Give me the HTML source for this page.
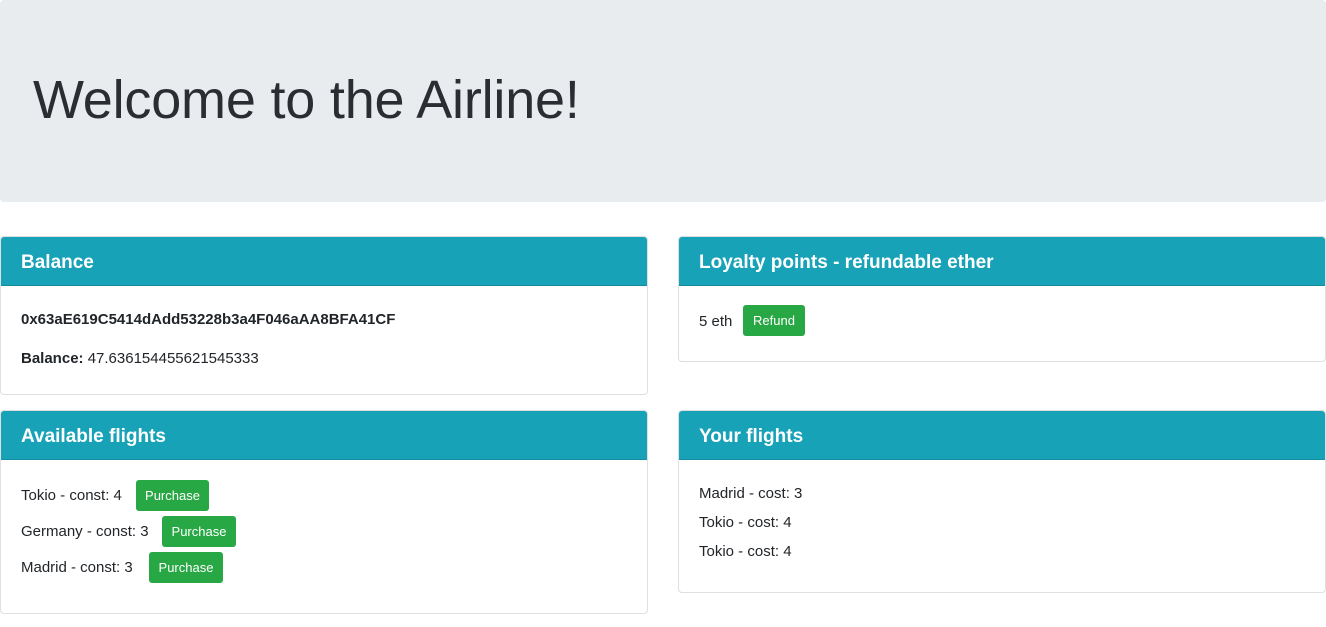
<!DOCTYPE html>
<html><head><meta charset="utf-8"><style>
*{box-sizing:border-box;margin:0;padding:0}
body{width:1326px;height:627px;background:#fff;font-family:"Liberation Sans",sans-serif;color:#212529;position:relative;overflow:hidden;font-size:15px}
.jumbo{position:absolute;left:0;top:0;width:1326px;height:202px;background:#e9ecef;border-radius:4px}
.jumbo h1{position:absolute;left:33px;top:68px;font-size:54px;font-weight:300;color:#2a2e32;letter-spacing:-0.2px;line-height:1.2}
.card{position:absolute;border:1px solid rgba(0,0,0,.125);border-radius:4px;overflow:hidden;background:#fff}
.hd{height:49px;background:#17a2b8;color:#fff;font-weight:bold;font-size:19px;padding:0 20px;line-height:51px;border-bottom:1px solid rgba(0,0,0,.125)}
.t{position:absolute;white-space:nowrap;line-height:20px}
.btn{position:absolute;background:#28a745;color:#fff;border-radius:3px;font-size:13px;text-align:center;line-height:32px;height:31px}
</style></head><body>
<div class="jumbo"><h1>Welcome to the Airline!</h1></div>

<div class="card" style="left:0;top:236px;width:648px;height:159px"><div class="hd">Balance</div></div>
<div class="t" style="left:21px;top:310px;font-weight:bold">0x63aE619C5414dAdd53228b3a4F046aAA8BFA41CF</div>
<div class="t" style="left:21px;top:349px"><b>Balance:</b> 47.636154455621545333</div>

<div class="card" style="left:678px;top:236px;width:648px;height:126px"><div class="hd">Loyalty points - refundable ether</div></div>
<div class="t" style="left:699px;top:312px">5 eth</div>
<div class="btn" style="left:743px;top:305px;width:62px">Refund</div>

<div class="card" style="left:0;top:410px;width:648px;height:204px"><div class="hd">Available flights</div></div>
<div class="t" style="left:21px;top:486px">Tokio - const: 4</div>
<div class="btn" style="left:136px;top:480px;width:73px">Purchase</div>
<div class="t" style="left:21px;top:522px">Germany - const: 3</div>
<div class="btn" style="left:162px;top:516px;width:74px">Purchase</div>
<div class="t" style="left:21px;top:558px">Madrid - const: 3</div>
<div class="btn" style="left:149px;top:552px;width:74px">Purchase</div>

<div class="card" style="left:678px;top:410px;width:648px;height:183px"><div class="hd">Your flights</div></div>
<div class="t" style="left:699px;top:484px">Madrid - cost: 3</div>
<div class="t" style="left:699px;top:513px">Tokio - cost: 4</div>
<div class="t" style="left:699px;top:542px">Tokio - cost: 4</div>
</body></html>
